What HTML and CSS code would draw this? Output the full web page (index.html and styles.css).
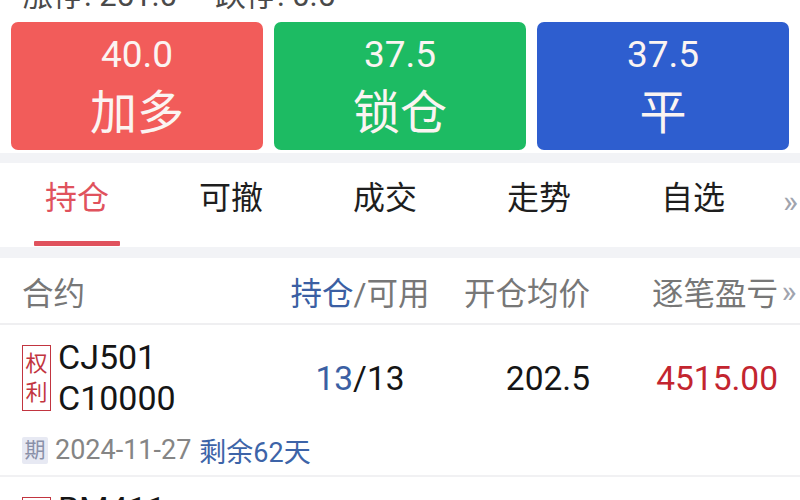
FILE: index.html
```html
<!DOCTYPE html>
<html lang="zh">
<head>
<meta charset="utf-8">
<link rel="stylesheet" href="styles.css">
</head>
<body>
<div class="limits">
  <span class="limit">涨停: 251.0</span>
  <span class="limit">跌停: 0.5</span>
</div>
<div class="actions">
  <div class="act act-red"><div class="act-val">40.0</div><div class="act-label">加多</div></div>
  <div class="act act-green"><div class="act-val">37.5</div><div class="act-label">锁仓</div></div>
  <div class="act act-blue"><div class="act-val">37.5</div><div class="act-label">平</div></div>
</div>
<div class="band"></div>
<div class="tabs">
  <div class="tab active"><span class="tab-text">持仓</span><span class="tab-line"></span></div>
  <div class="tab"><span class="tab-text">可撤</span></div>
  <div class="tab"><span class="tab-text">成交</span></div>
  <div class="tab"><span class="tab-text">走势</span></div>
  <div class="tab"><span class="tab-text">自选</span></div>
  <div class="tab-more">»</div>
</div>
<div class="band band2"></div>
<div class="thead">
  <div class="c1">合约</div>
  <div class="c2"><span class="blue">持仓</span>/可用</div>
  <div class="c3">开仓均价</div>
  <div class="c4">逐笔盈亏</div>
  <div class="more">»</div>
</div>
<div class="row">
  <div class="row-main">
    <div class="c1 contract">
      <span class="tag">权<br>利</span>
      <span class="name">CJ501<br>C10000</span>
    </div>
    <div class="c2 num"><span class="blue">13</span>/13</div>
    <div class="c3 num">202.5</div>
    <div class="c4 num red">4515.00</div>
  </div>
  <div class="row-sub">
    <span class="qi">期</span>
    <span class="date">2024-11-27</span>
    <span class="remain">剩余62天</span>
  </div>
</div>
<div class="row">
  <div class="row-main">
    <div class="c1 contract">
      <span class="tag">权<br>利</span>
      <span class="name">RM411<br>C2600</span>
    </div>
    <div class="c2 num"><span class="blue">5</span>/5</div>
    <div class="c3 num">38.0</div>
    <div class="c4 num red">120.00</div>
  </div>
</div>
</body>
</html>
```

FILE: styles.css
```css
html, body {
  margin: 0;
  padding: 0;
  background: #ffffff;
  width: 800px;
  height: 500px;
  overflow: hidden;
  font-family: Roboto, "Noto Sans CJK SC", sans-serif;
}

.limits {
  height: 22px;
  display: flex;
  align-items: flex-end;
  overflow: hidden;
  padding-left: 22px;
  box-sizing: border-box;
}
.limit {
  font-size: 31px;
  line-height: 30px;
  color: #4a4a4a;
  margin-bottom: 11px;
  width: 193px;
  flex: none;
}

.actions {
  display: flex;
  gap: 11px;
  padding: 0 11px 3px;
}
.act {
  flex: 1;
  height: 128px;
  border-radius: 7px;
  display: flex;
  flex-direction: column;
  align-items: center;
  padding-top: 13px;
  box-sizing: border-box;
  color: #fbf4f2;
}
.act-red { background: #f25c5a; }
.act-green { background: #1dbb63; }
.act-blue { background: #2e5ecf; }
.act-val {
  font-size: 37px;
  line-height: 40px;
}
.act-label {
  font-size: 47px;
  line-height: 56px;
  margin-top: 10px;
}

.band {
  height: 10px;
  background: #f2f3f6;
}
.band2 { height: 11px; }

.tabs {
  display: flex;
  height: 84px;
  background: #fff;
}
.tab {
  width: 154px;
  flex: none;
  display: flex;
  flex-direction: column;
  align-items: center;
}
.tab-text {
  margin-top: 15px;
  font-size: 32px;
  line-height: 40px;
  color: #1e1e1e;
}
.tab.active .tab-text { color: #e0525d; }
.tab-line {
  margin-top: auto;
  margin-bottom: 1px;
  width: 86px;
  height: 5px;
  border-radius: 1px;
  background: #e0525d;
}
.tab-more {
  flex: 1;
  font-size: 32px;
  line-height: 40px;
  margin-top: 18px;
  color: #a0a4ae;
  text-align: right;
  padding-right: 2px;
}

.thead {
  display: flex;
  align-items: center;
  height: 65px;
  border-bottom: 2px solid #efeff1;
  font-size: 31.5px;
  color: #777;
  padding-left: 22px;
}
.c1 { width: 248px; flex: none; }
.c2 { width: 180px; flex: none; text-align: center; }
.c3 { width: 140px; flex: none; text-align: right; }
.c4 { width: 188px; flex: none; text-align: right; }
.more {
  flex: 1;
  text-align: center;
  color: #a0a4ae;
  font-size: 32px;
}
.blue { color: #3b5fa3; }
.red { color: #c3252f; }

.row {
  padding: 12px 0 10px 22px;
  border-bottom: 2px solid #f1f1f3;
}
.row-main {
  display: flex;
  align-items: center;
}
.contract {
  display: flex;
  align-items: center;
}
.tag {
  width: 29px;
  height: 66px;
  box-sizing: border-box;
  border: 1.5px solid #c23540;
  color: #c23540;
  font-size: 22px;
  line-height: 29px;
  text-align: center;
  display: flex;
  flex-direction: column;
  justify-content: center;
  margin-right: 7px;
}
.name {
  font-size: 34px;
  line-height: 41px;
  color: #151515;
}
.num {
  font-size: 33.5px;
  color: #151515;
}
.num.red { color: #c3252f; }

.row-sub {
  display: flex;
  align-items: center;
  margin-top: 16px;
  height: 30px;
  font-size: 27px;
}
.qi {
  width: 26px;
  height: 27px;
  background: #e7e9f3;
  color: #8a90a8;
  font-size: 21px;
  line-height: 27px;
  text-align: center;
  border-radius: 2px;
  margin-right: 7px;
}
.date { color: #858585; margin-right: 8px; }
.remain { color: #3d64a8; }
```
